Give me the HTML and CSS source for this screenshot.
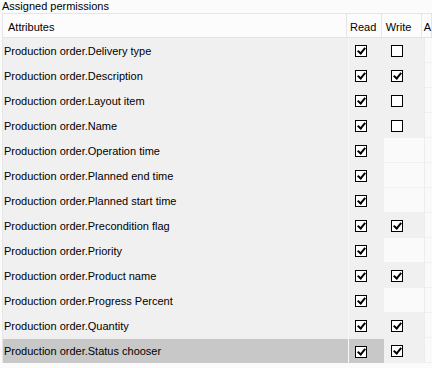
FILE: index.html
```html
<!DOCTYPE html>
<html lang="en">
  <head>
    <meta charset="UTF-8" />
    <title>Assigned permissions</title>
    <link rel="stylesheet" href="styles.css">
  </head>
  <body>
    <div class="caption">Assigned permissions</div>
    <div class="grid">
      <div class="row head">
        <div class="cell attr">Attributes</div>
        <div class="cell read">Read</div>
        <div class="cell write">Write</div>
        <div class="cell extra">A</div>
      </div>

      <div class="row">
        <div class="cell attr">Production order.Delivery type</div>
        <div class="cell read"><span class="box on"></span></div>
        <div class="cell write"><span class="box"></span></div>
        <div class="cell extra"></div>
      </div>
      <div class="row">
        <div class="cell attr">Production order.Description</div>
        <div class="cell read"><span class="box on"></span></div>
        <div class="cell write"><span class="box on"></span></div>
        <div class="cell extra"></div>
      </div>
      <div class="row">
        <div class="cell attr">Production order.Layout item</div>
        <div class="cell read"><span class="box on"></span></div>
        <div class="cell write"><span class="box"></span></div>
        <div class="cell extra"></div>
      </div>
      <div class="row">
        <div class="cell attr">Production order.Name</div>
        <div class="cell read"><span class="box on"></span></div>
        <div class="cell write"><span class="box"></span></div>
        <div class="cell extra"></div>
      </div>
      <div class="row">
        <div class="cell attr">Production order.Operation time</div>
        <div class="cell read"><span class="box on"></span></div>
        <div class="cell write empty"></div>
        <div class="cell extra"></div>
      </div>
      <div class="row">
        <div class="cell attr">Production order.Planned end time</div>
        <div class="cell read"><span class="box on"></span></div>
        <div class="cell write empty"></div>
        <div class="cell extra"></div>
      </div>
      <div class="row">
        <div class="cell attr">Production order.Planned start time</div>
        <div class="cell read"><span class="box on"></span></div>
        <div class="cell write empty"></div>
        <div class="cell extra"></div>
      </div>
      <div class="row">
        <div class="cell attr">Production order.Precondition flag</div>
        <div class="cell read"><span class="box on"></span></div>
        <div class="cell write"><span class="box on"></span></div>
        <div class="cell extra"></div>
      </div>
      <div class="row">
        <div class="cell attr">Production order.Priority</div>
        <div class="cell read"><span class="box on"></span></div>
        <div class="cell write empty"></div>
        <div class="cell extra"></div>
      </div>
      <div class="row">
        <div class="cell attr">Production order.Product name</div>
        <div class="cell read"><span class="box on"></span></div>
        <div class="cell write"><span class="box on"></span></div>
        <div class="cell extra"></div>
      </div>
      <div class="row">
        <div class="cell attr">Production order.Progress Percent</div>
        <div class="cell read"><span class="box on"></span></div>
        <div class="cell write empty"></div>
        <div class="cell extra"></div>
      </div>
      <div class="row">
        <div class="cell attr">Production order.Quantity</div>
        <div class="cell read"><span class="box on"></span></div>
        <div class="cell write"><span class="box on"></span></div>
        <div class="cell extra"></div>
      </div>
      <div class="row selected">
        <div class="cell attr">Production order.Status chooser</div>
        <div class="cell read"><span class="box on"></span></div>
        <div class="cell write"><span class="box on"></span></div>
        <div class="cell extra"></div>
      </div>
    </div>
  </body>
</html>
```

FILE: styles.css
```css
body {
  margin: 0;
  background: #fbfbfb;
  font-family: Tahoma, "Liberation Sans", sans-serif;
  font-size: 11px;
  color: #000;
  overflow: hidden;
}

.caption {
  height: 13px;
  line-height: 12px;
  padding-left: 2px;
}

.grid {
  margin-left: 2px;
  border-top: 1px solid #e6e6e6;
  border-left: 1px solid #e6e6e6;
  background: #f0f0f0;
}

.row {
  display: flex;
  height: 25px;
}

.cell {
  display: flex;
  align-items: center;
  box-sizing: border-box;
}

.attr {
  width: 346px;
  padding-left: 1px;
  border-right: 1px solid #f9f9f9;
}

.read {
  width: 35px;
  padding-left: 6px;
}

.write {
  width: 40px;
  padding-left: 7px;
}

.extra {
  flex: 1;
  background: #fafafa;
  border-left: 1px solid #ececec;
  border-bottom: 1px solid #f0f0f0;
}

.write.empty {
  background: #fafafa;
  border-bottom: 1px solid #f0f0f0;
}

/* header */
.head {
  height: 23px;
  background: #fcfcfc;
  border-bottom: 1px solid #e3e3e3;
}

.head .cell {
  border-right: 1px solid #e6e6e6;
  padding-top: 2px;
}

.head .attr {
  padding-left: 5px;
}

.head .read {
  padding-left: 3px;
}

.head .write {
  padding-left: 4px;
}

.head .extra {
  background: #fcfcfc;
  border-left: 0;
  border-bottom: 0;
  padding-left: 2px;
}

.selected .attr,
.selected .read {
  background: #c8c8c8;
  border-top: 1px solid #f0f0f0;
}

.box {
  width: 12px;
  height: 12px;
  margin-top: 1px;
  box-sizing: border-box;
  border: 1px solid #000;
  background: #fff;
  position: relative;
}

.box.on::after {
  content: "";
  position: absolute;
  left: 3px;
  top: 0;
  width: 3px;
  height: 6px;
  border: solid #000;
  border-width: 0 2px 2px 0;
  transform: rotate(40deg);
}
```
